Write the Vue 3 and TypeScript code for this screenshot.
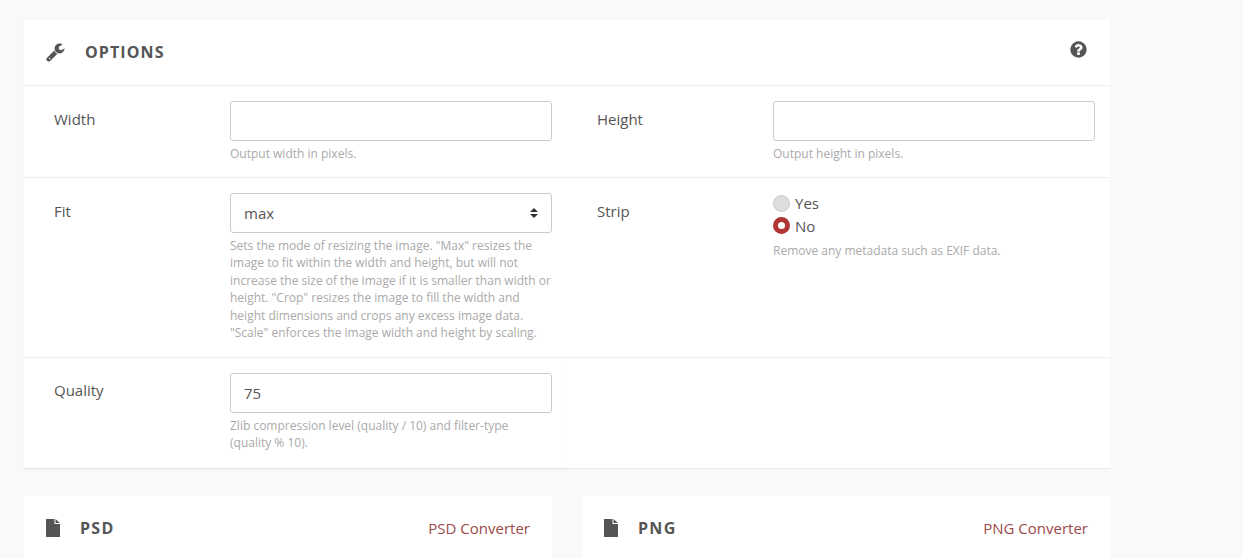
<script setup lang="ts">
import { ref } from 'vue'

const width = ref('')
const height = ref('')
const fit = ref('max')
const strip = ref('no')
const quality = ref('75')

const wrench = 'M384 1472q0-26-19-45t-45-19-45 19-19 45 19 45 45 19 45-19 19-45zm644-420l-682 682q-37 37-90 37-52 0-91-37l-106-108q-38-36-38-90 0-53 38-91l681-681q39 98 114.5 173.5t173.5 114.5zm634-435q0 39-23 106-47 134-164.5 217.5t-258.5 83.5q-185 0-316.5-131.5t-131.5-316.5 131.5-316.5 316.5-131.5q58 0 121.5 16.5t107.5 46.5q16 11 16 28t-16 28l-293 169v224l193 107q5-3 79-48.5t135.5-81 70.5-35.5q15 0 23.5 10t8.5 25z'
const question = 'M1024 1376v-192q0-14-9-23t-23-9h-192q-14 0-23 9t-9 23v192q0 14 9 23t23 9h192q14 0 23-9t9-23zm256-672q0-88-55.5-163t-138.5-116-170-41q-243 0-371 213-15 24 8 42l132 100q7 6 19 6 16 0 25-12 53-68 86-92 34-24 86-24 48 0 85.5 26t37.5 59q0 38-20 61t-68 45q-63 28-115.5 86.5t-52.5 125.5v36q0 14 9 23t23 9h192q14 0 23-9t9-23q0-19 21.5-49.5t54.5-49.5q32-18 49-28.5t46-35 44.5-48 28-60.5 12.5-81zm384 192q0 209-103 385.5t-279.5 279.5-385.5 103-385.5-103-279.5-279.5-103-385.5 103-385.5 279.5-279.5 385.5-103 385.5 103 279.5 279.5 103 385.5z'

const formats = [
  { name: 'PSD', link: 'PSD Converter' },
  { name: 'PNG', link: 'PNG Converter' },
]
</script>

<template>
  <div class="page">
    <section class="card options">
      <header class="card-head">
        <div class="title">
          <svg class="wrench" viewBox="0 0 1792 1792"><path :d="wrench" /></svg>
          <h2>OPTIONS</h2>
        </div>
        <svg class="help" viewBox="0 0 1792 1792"><path :d="question" /></svg>
      </header>

      <div class="row first">
        <div class="field">
          <label>Width</label>
          <div class="control">
            <input v-model="width" class="text" type="text" />
            <p class="hint">Output width in pixels.</p>
          </div>
        </div>
        <div class="field">
          <label>Height</label>
          <div class="control">
            <input v-model="height" class="text" type="text" />
            <p class="hint">Output height in pixels.</p>
          </div>
        </div>
      </div>

      <div class="row second">
        <div class="field">
          <label>Fit</label>
          <div class="control">
            <div class="select-wrap">
              <select v-model="fit" class="text">
                <option value="max">max</option>
                <option value="crop">crop</option>
                <option value="scale">scale</option>
              </select>
              <svg class="arrows" viewBox="0 0 8 10"><path d="M4 0 8 4H0zM4 10 0 6h8z" /></svg>
            </div>
            <p class="hint">Sets the mode of resizing the image. "Max" resizes the image to fit within the width and height, but will not increase the size of the image if it is smaller than width or height. "Crop" resizes the image to fill the width and height dimensions and crops any excess image data. "Scale" enforces the image width and height by scaling.</p>
          </div>
        </div>
        <div class="field">
          <label>Strip</label>
          <div class="control radios">
            <label class="radio"><input v-model="strip" type="radio" value="yes" /><span>Yes</span></label>
            <label class="radio"><input v-model="strip" type="radio" value="no" /><span>No</span></label>
            <p class="hint">Remove any metadata such as EXIF data.</p>
          </div>
        </div>
      </div>

      <div class="row third">
        <div class="field shadowed">
          <label>Quality</label>
          <div class="control">
            <input v-model="quality" class="text" type="text" />
            <p class="hint">Zlib compression level (quality / 10) and filter-type (quality % 10).</p>
          </div>
        </div>
        <div class="field"></div>
      </div>
    </section>

    <div class="formats">
      <section v-for="f in formats" :key="f.name" class="card format">
        <div class="title">
          <svg class="file" viewBox="0 0 14 18"><path d="M0 0H8.5V5H14V18H0zM9.5 0 14 4H9.5z" /></svg>
          <h3>{{ f.name }}</h3>
        </div>
        <a class="link" href="#">{{ f.link }}</a>
      </section>
    </div>
  </div>
</template>

<style>
html, body { margin: 0; background: #f9f9f9; overflow: hidden; }
</style>

<style scoped>
.page {
  box-sizing: border-box;
  width: 1243px;
  height: 558px;
  padding: 20px 133px 0 24px;
  overflow: hidden;
  background: #f9f9f9;
  font-family: "Open Sans", sans-serif;
  font-size: 14px;
  color: #555;
}
.card { background: #fff; }
.options { box-shadow: 0 1px 1px rgba(0, 0, 0, 0.06); }
.card-head {
  display: flex;
  justify-content: space-between;
  height: 66px;
  box-sizing: border-box;
  padding: 21px 22px 0 22px;
  border-bottom: 1px solid #eee;
}
.title { display: flex; align-items: center; height: 22px; }
.wrench { width: 20px; height: 20px; fill: #555; margin-right: 19px; }
h2, h3 { margin: 0; font-weight: 700; font-size: 16px; line-height: 22px; letter-spacing: 1.1px; color: #555; }
h3 { letter-spacing: 1.3px; }
.help { width: 19px; height: 19px; fill: #555; margin-top: -1px; }
.row { display: grid; grid-template-columns: 543px 543px; border-bottom: 1px solid #eee; }
.row.first { height: 91px; }
.row.second { height: 179px; }
.row.third { height: 110px; border-bottom: 0; }
.field { display: flex; box-sizing: border-box; padding: 15px 15px 0 30px; }
.shadowed { box-shadow: 0 1px 1px rgba(0, 0, 0, 0.04); }
.field > label { width: 176px; flex: none; font-size: 15px; line-height: 37px; }
.third .field > label { line-height: 34px; }
.control { flex: 1; min-width: 0; }
.text {
  display: block;
  box-sizing: border-box;
  width: 100%;
  height: 40px;
  padding: 0 13px;
  border: 1px solid #ccc;
  border-radius: 3px;
  background: #fff;
  font: 15px "Open Sans", sans-serif;
  color: #555;
  outline: none;
  appearance: none;
}
.select-wrap { position: relative; }
.arrows { position: absolute; right: 14px; top: 15px; width: 8px; height: 10px; fill: #333; }
.hint { margin: 4px 0 0; font-size: 12px; line-height: 17.4px; color: #aaa; }
.radios { margin-top: -1px; }
.radio { display: flex; align-items: center; height: 22.5px; font-size: 15px; }
.radio input {
  appearance: none;
  box-sizing: border-box;
  width: 17px;
  height: 17px;
  margin: 0 5px 0 0;
  border: 1px solid #ccc;
  border-radius: 50%;
  background: #ddd;
}
.radio input:checked { border: 5px solid #b03535; background: #fff; }
.radios .hint { margin-top: 5px; }
.formats { display: flex; gap: 30px; margin-top: 28px; }
.format {
  display: flex;
  justify-content: space-between;
  flex: 1;
  height: 120px;
  box-sizing: border-box;
  padding: 21px 22px 0 22px;
}
.file { width: 14px; height: 18px; fill: #555; margin-right: 20px; }
.link { font-size: 15px; line-height: 22px; color: #9c4a4a; text-decoration: none; }
</style>
